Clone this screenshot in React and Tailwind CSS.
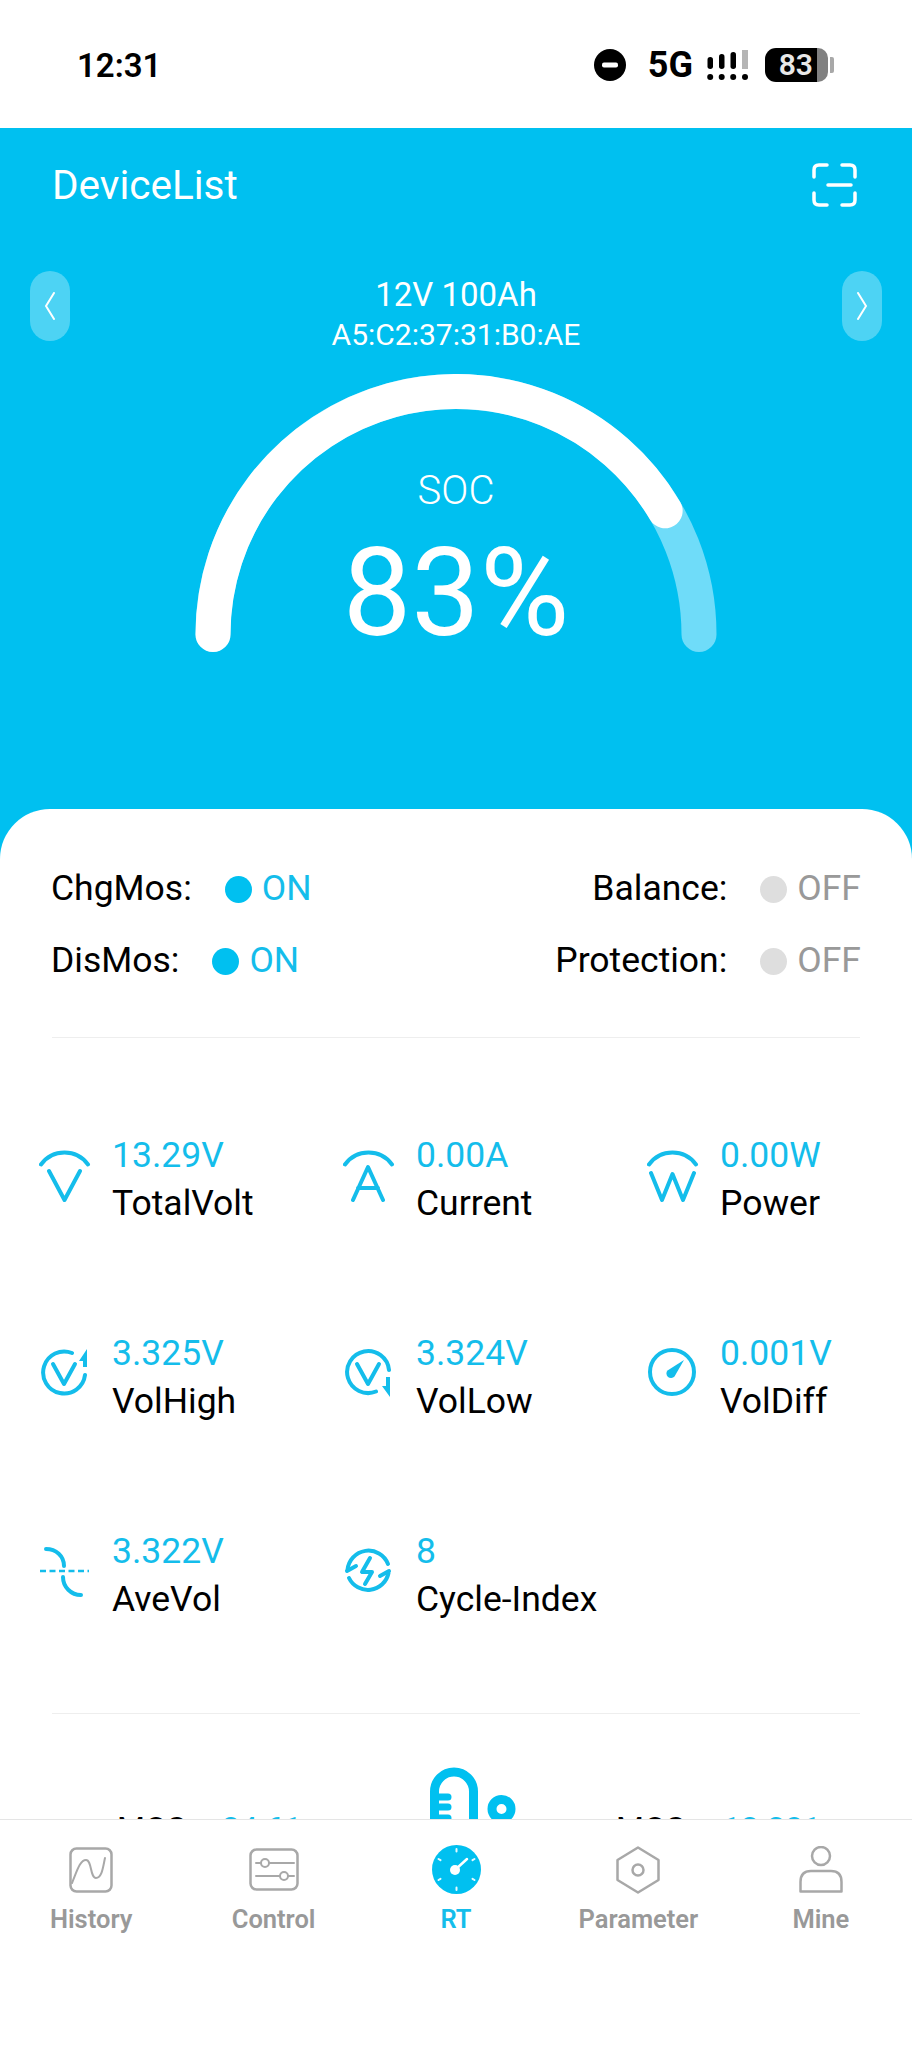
import React from 'react';

// stroke icons for the metric grid, all in a 52 box
const MetricIcon = ({ children }) => (
  <svg viewBox="0 0 52 52" className="w-[52px] h-[52px] shrink-0 -mt-[6px]" fill="none" stroke="#14bdeb" strokeWidth="4" strokeLinecap="round" strokeLinejoin="round">
    {children}
  </svg>
);

const topArc = <path d="M2 14.5A29 29 0 0 1 49 14.5" />;

const icons = {
  volt: <MetricIcon>{topArc}<path d="M10 21L25.500 50L41 21" /></MetricIcon>,
  amp: <MetricIcon>{topArc}<path d="M10 50L25 17L40 50M15 38H35" /></MetricIcon>,
  watt: <MetricIcon>{topArc}<path d="M4 23L15 50L25.500 24L36 50L47 23" /></MetricIcon>,
  high: (
    <MetricIcon>
      <path d="M33 5A21 21 0 1 0 46 27" />
      <path d="M14 16L25 36L36 16" />
      <path d="M48 1L48 19L44 19L44 13L40 13Z" fill="#14bdeb" stroke="none" />
    </MetricIcon>
  ),
  low: (
    <MetricIcon>
      <path d="M46 22A21 21 0 1 0 33 43.500" />
      <path d="M14 16L25 36L36 16" />
      <path d="M47 49L47 29L43 29L43 38L39 38Z" fill="#14bdeb" stroke="none" />
    </MetricIcon>
  ),
  diff: (
    <MetricIcon>
      <circle cx="25" cy="24" r="22" />
      <path d="M37 12L27.500 28.500A4.600 4.600 0 0 1 20.500 22.500Z" fill="#14bdeb" stroke="none" />
    </MetricIcon>
  ),
  ave: (
    <MetricIcon>
      <path d="M7 3C17 3 25 10 25 20" />
      <path d="M1 25H50" strokeWidth="2.500" strokeDasharray="6 3.500" strokeLinecap="butt" />
      <path d="M24 31C24 41 32 49 42 49" />
    </MetricIcon>
  ),
  cycle: (
    <MetricIcon>
      <path d="M4.500 24A21 21 0 0 1 45 18" />
      <path d="M45.500 27A21 21 0 0 1 6 32" />
      <path d="M4 25L13 20M46 25L37 30" />
      <path d="M27 12L19 26H29L22 38" />
    </MetricIcon>
  ),
};

const metrics = [
  { icon: 'volt', value: '13.29V', label: 'TotalVolt' },
  { icon: 'amp', value: '0.00A', label: 'Current' },
  { icon: 'watt', value: '0.00W', label: 'Power' },
  { icon: 'high', value: '3.325V', label: 'VolHigh' },
  { icon: 'low', value: '3.324V', label: 'VolLow' },
  { icon: 'diff', value: '0.001V', label: 'VolDiff' },
  { icon: 'ave', value: '3.322V', label: 'AveVol' },
  { icon: 'cycle', value: '8', label: 'Cycle-Index' },
];

const Flag = ({ label, on }) => (
  <div className="flex items-center h-[40px]">
    <span className="text-black">{label}</span>
    <span className={`ml-[33px] w-[27px] h-[27px] rounded-full ${on ? 'bg-[#00c0f0]' : 'bg-[#dedede]'}`} />
    <span className={`ml-[10px] ${on ? 'text-[#14bdeb]' : 'text-[#999999]'}`}>{on ? 'ON' : 'OFF'}</span>
  </div>
);

const navStroke = { fill: 'none', stroke: '#a8a8a8', strokeWidth: 2.5, strokeLinecap: 'round', strokeLinejoin: 'round' };

const tabs = [
  {
    label: 'History',
    icon: (
      <svg width="44" height="46" viewBox="0 0 44 46" {...navStroke}>
        <rect x="1.500" y="1.500" width="41" height="43" rx="6" />
        <path d="M3 36C8 24 11 13 17 13C23 13 21 31 27 31C33 31 34 20 36 11" strokeWidth="2" />
      </svg>
    ),
  },
  {
    label: 'Control',
    icon: (
      <svg width="50" height="43" viewBox="0 0 50 43" {...navStroke}>
        <rect x="1.500" y="1.500" width="47" height="40" rx="6" />
        <path d="M7 15H12M20 15H45M7 28H31M39 28H45" strokeWidth="2" />
        <circle cx="16" cy="15" r="4" strokeWidth="2" />
        <circle cx="35" cy="28" r="4" strokeWidth="2" />
      </svg>
    ),
  },
  {
    label: 'RT',
    active: true,
    icon: (
      <svg width="49" height="49" viewBox="0 0 49 49">
        <circle cx="24.500" cy="24.500" r="24.500" fill="#00c0f0" />
        <g stroke="#ffffff" strokeWidth="2" strokeLinecap="round" opacity="0.9">
          <path d="M24.500 4V6.500M24.500 42.500V45M6.500 14L8.500 15.200M40.500 33.800L42.500 35M6.500 35L8.500 33.800M40.500 15.200L42.500 14" />
        </g>
        <path d="M24 24L35 14" stroke="#ffffff" strokeWidth="2.500" strokeLinecap="round" />
        <circle cx="23" cy="25" r="5" fill="#ffffff" />
      </svg>
    ),
  },
  {
    label: 'Parameter',
    icon: (
      <svg width="44" height="48" viewBox="0 0 44 48" {...navStroke}>
        <path d="M22 1.500L42.500 14V34L22 46.500L1.500 34V14Z" />
        <circle cx="22" cy="24" r="5.500" />
      </svg>
    ),
  },
  {
    label: 'Mine',
    icon: (
      <svg width="44" height="47" viewBox="0 0 44 47" {...navStroke}>
        <circle cx="22" cy="10" r="9" />
        <path d="M1.500 45.500V36Q1.500 25 12 25H32Q42.500 25 42.500 36V45.500Z" />
      </svg>
    ),
  },
];

const App = () => {
  // gauge is a half circle, 83% of it is the bright part
  const radius = 243;
  const angle = Math.PI * 0.83;
  const endX = 261 - radius * Math.cos(angle);
  const endY = 260.5 - radius * Math.sin(angle);

  return (
    <div className="h-screen flex flex-col bg-white overflow-hidden font-['Roboto',sans-serif]">
      {/* status bar */}
      <div className="h-[128px] shrink-0 flex items-center justify-between pt-[2px] pl-[77px] pr-[78px] text-black">
        <span className="text-[33px] font-semibold leading-none">12:31</span>
        <div className="flex items-center">
          <svg width="32" height="32" viewBox="0 0 32 32">
            <circle cx="16" cy="16" r="16" fill="#000000" />
            <rect x="8" y="13.500" width="16" height="5" rx="2" fill="#ffffff" />
          </svg>
          <span className="ml-[22px] text-[36px] font-bold leading-none">5G</span>
          <svg className="ml-[14px]" width="42" height="30" viewBox="0 0 42 30" fill="#000000">
            <rect x="0.500" y="7" width="5.500" height="12" rx="2.700" />
            <rect x="12" y="4" width="5.500" height="15" rx="2.700" />
            <rect x="23.500" y="2" width="5.500" height="17" rx="2.700" />
            <rect x="35" y="0" width="6" height="19" fill="#b5b5b5" />
            <circle cx="3.200" cy="27" r="3" />
            <circle cx="14.700" cy="27" r="3" />
            <circle cx="26.200" cy="27" r="3" />
            <circle cx="38" cy="27" r="3" />
          </svg>
          <div className="ml-[16px] flex items-center">
            <div className="w-[52px] h-[34px] bg-black rounded-l-[11px] flex items-center justify-end pr-[4px] text-[#e8e8e8] text-[30px] font-semibold leading-none">83</div>
            <div className="w-[11px] h-[34px] bg-[#808080] rounded-r-[10px]" />
            <div className="ml-[2px] w-[4px] h-[16px] bg-[#a8a8a8] rounded-r-[2px]" />
          </div>
        </div>
      </div>

      <main className="flex-1 min-h-0 overflow-hidden bg-[#00c0f0]">
        {/* hero */}
        <div className="h-[681px] text-white">
          <div className="h-[114px] flex items-center justify-between pl-[52px] pr-[55px]">
            <span className="text-[40.5px] leading-none">DeviceList</span>
            <svg width="45" height="44" viewBox="0 0 45 44" fill="none" stroke="#ffffff" strokeWidth="3.500" strokeLinecap="round">
              <path d="M2 14V7Q2 2 7 2H15M30 2H38Q43 2 43 7V14M2 30V37Q2 42 7 42H15M30 42H38Q43 42 43 37V30M16 22H39" />
            </svg>
          </div>

          <div className="mt-[29px] h-[103px] flex justify-between px-[30px]">
            <button className="w-[40px] h-[70px] rounded-full bg-white/30 flex items-center justify-center">
              <svg width="12" height="28" viewBox="0 0 12 28" fill="none" stroke="#ffffff" strokeWidth="2" strokeLinecap="round"><path d="M10 1L2 14L10 27" /></svg>
            </button>
            <div className="mt-[3px] flex flex-col items-center">
              <span className="text-[33px] leading-[42px]">12V 100Ah</span>
              <span className="text-[30px] leading-[38px]">A5:C2:37:31:B0:AE</span>
            </div>
            <button className="w-[40px] h-[70px] rounded-full bg-white/30 flex items-center justify-center">
              <svg width="12" height="28" viewBox="0 0 12 28" fill="none" stroke="#ffffff" strokeWidth="2" strokeLinecap="round"><path d="M2 1L10 14L2 27" /></svg>
            </button>
          </div>

          <div className="relative w-[522px] h-[278px] mx-auto">
            <svg width="522" height="278" viewBox="0 0 522 278" fill="none" strokeWidth="35" strokeLinecap="round">
              <path d="M18 260.500A243 243 0 0 1 504 260.500" stroke="#6fdcf9" />
              <path d={`M18 260.5A243 243 0 0 1 ${endX} ${endY}`} stroke="#ffffff" />
            </svg>
            <div className="absolute inset-x-0 top-[94px] flex flex-col items-center">
              <span className="text-[40px] font-light leading-[46px]">SOC</span>
              <span className="text-[122px] font-normal leading-[124px] mt-[18px]">83%</span>
            </div>
          </div>
        </div>

        {/* white card */}
        <div className="h-[1100px] bg-white rounded-t-[50px]">
          <div className="pt-[60px] pl-[51px] pr-[51px] text-[35.5px] flex flex-col gap-[32px]">
            <div className="flex justify-between">
              <Flag label="ChgMos:" on />
              <Flag label="Balance:" />
            </div>
            <div className="flex justify-between">
              <Flag label="DisMos:" on />
              <Flag label="Protection:" />
            </div>
          </div>
          <div className="mt-[56px] mx-[52px] h-px bg-[#eeeeee]" />

          <div className="pt-[93px] pb-[90px] grid grid-cols-3 gap-y-[102px]">
            {metrics.map(m => (
              <div key={m.label} className="h-[96px] pl-[39px] flex items-center gap-[21px] text-[35.5px] leading-[48px]">
                {icons[m.icon]}
                <div>
                  <div className="text-[#14bdeb]">{m.value}</div>
                  <div className="text-black">{m.label}</div>
                </div>
              </div>
            ))}
          </div>
          <div className="mx-[52px] h-px bg-[#eeeeee]" />

          {/* cut off by the tab bar */}
          <div className="pt-[53px] grid grid-cols-3 text-[32px] leading-[46px]">
            <div className="pl-[117px] pt-[38px] flex gap-[28px] whitespace-nowrap">
              <span className="text-black">MOS:</span>
              <span className="text-[#14bdeb]">24.61</span>
            </div>
            <div className="pl-[126px]">
              <svg width="86" height="120" viewBox="0 0 86 120" fill="none" stroke="#00c0f0" strokeWidth="9">
                <path d="M4.500 120V24.500A19.500 19.500 0 0 1 43.500 24.500V120" />
                <path d="M4.500 30H18M4.500 40H18M4.500 51H18" strokeLinecap="round" strokeWidth="7" />
                <circle cx="71.500" cy="42" r="9.500" />
              </svg>
            </div>
            <div className="pl-[8px] pt-[38px] flex gap-[30px] whitespace-nowrap">
              <span className="text-black">MOS:</span>
              <span className="text-[#14bdeb]">12.281</span>
            </div>
          </div>
        </div>
      </main>

      {/* tab bar */}
      <nav className="h-[229px] shrink-0 bg-white border-t border-[#e5e5e5] flex items-start pt-[25px]">
        {tabs.map(t => (
          <div key={t.label} className="flex-1 flex flex-col items-center">
            <div className="h-[49px] flex items-center justify-center">{t.icon}</div>
            <span className={`mt-[10px] text-[25.5px] font-semibold leading-[30px] ${t.active ? 'text-[#14bdeb]' : 'text-[#999999]'}`}>{t.label}</span>
          </div>
        ))}
      </nav>
    </div>
  );
};

export default App;
